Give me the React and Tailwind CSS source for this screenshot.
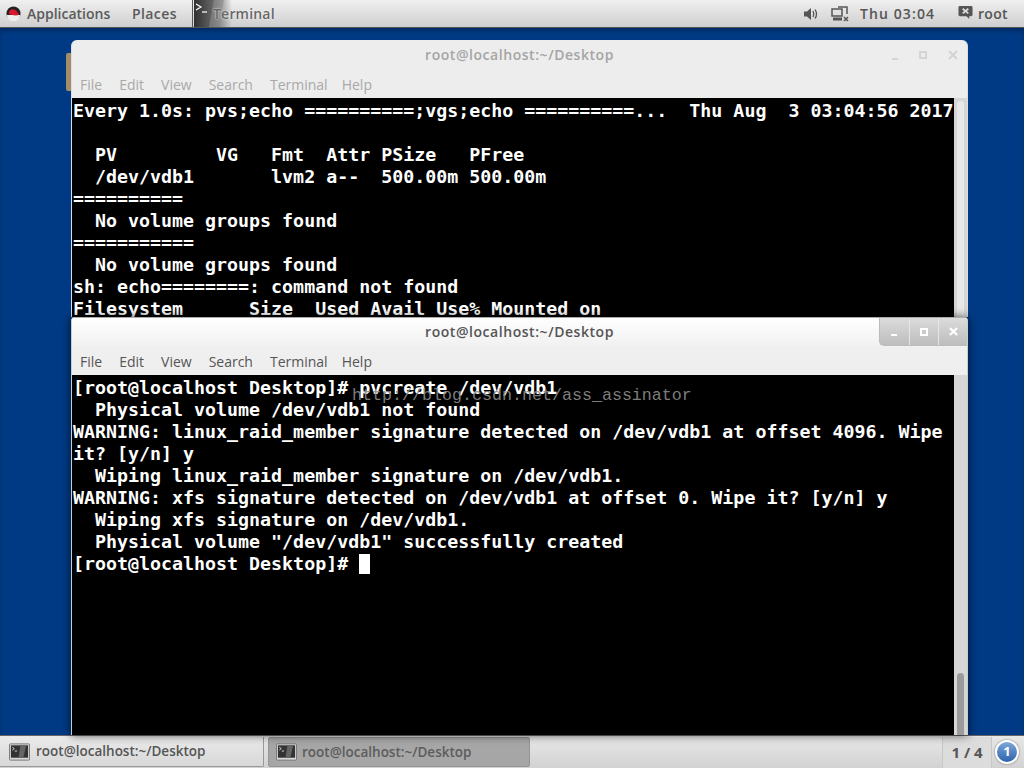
const mono = "font-['DejaVu_Sans_Mono',monospace] font-bold text-white text-[18.3px] leading-[22px] whitespace-pre";
const ui = "font-['Open_Sans',sans-serif]";

const backLines = [
  "Every 1.0s: pvs;echo ==========;vgs;echo ==========...  Thu Aug  3 03:04:56 2017",
  "",
  "  PV         VG   Fmt  Attr PSize   PFree",
  "  /dev/vdb1       lvm2 a--  500.00m 500.00m",
  "==========",
  "  No volume groups found",
  "===========",
  "  No volume groups found",
  "sh: echo========: command not found",
  "Filesystem      Size  Used Avail Use% Mounted on",
];
const frontLines = [
  "[root@localhost Desktop]# pvcreate /dev/vdb1",
  "  Physical volume /dev/vdb1 not found",
  "WARNING: linux_raid_member signature detected on /dev/vdb1 at offset 4096. Wipe",
  "it? [y/n] y",
  "  Wiping linux_raid_member signature on /dev/vdb1.",
  "WARNING: xfs signature detected on /dev/vdb1 at offset 0. Wipe it? [y/n] y",
  "  Wiping xfs signature on /dev/vdb1.",
  '  Physical volume "/dev/vdb1" successfully created',
];

function TermIcon({ className }) {
  return (
    <svg viewBox="0 0 22 18" className={className}>
      <rect x="0.5" y="0.5" width="21" height="17" rx="1" fill="#d8d8d8" stroke="#777" />
      <rect x="2" y="2" width="18" height="13" fill="#333" />
      <path d="M12 2h6l-3 13h-5z" fill="#666" />
      <path d="M3.5 4l2 1.5-2 1.5" stroke="#fff" strokeWidth="0.8" fill="none" />
      <path d="M6 8h2.5" stroke="#fff" strokeWidth="0.8" />
    </svg>
  );
}

function Menu({ dim }) {
  return (
    <div className={`h-[28px] flex items-center gap-[17px] pl-[8px] text-[14px] ${ui} ${dim ? "text-[#a9a9a9]" : "text-[#555]"}`}>
      <span>File</span><span>Edit</span><span>View</span><span>Search</span><span>Terminal</span><span className="-ml-[3px]">Help</span>
    </div>
  );
}

function Terminal({ lines, children, thumb, height }) {
  return (
    <div className={`flex ${height} bg-black`}>
      <div className={`flex-1 overflow-hidden relative pl-[1px] pt-[2px] ${mono}`}>
        {lines.map((l, i) => <div key={i} className="h-[22px]">{l || " "}</div>)}
        {children}
      </div>
      <div className="w-[13px] bg-[#d6d6d6] flex flex-col justify-end items-center shrink-0">{thumb}</div>
    </div>
  );
}

export default function App() {
  return (
    <div className="w-[1024px] h-[768px] overflow-hidden flex flex-col bg-[#003a85]">
      <header className={`h-[28px] shrink-0 flex items-center border-b border-[#555] bg-gradient-to-b from-[#f0f0f0] to-[#cfcfcf] text-[14px] text-[#555] ${ui}`}>
        <svg viewBox="0 0 16 16" className="w-[15px] h-[15px] ml-[6px] mr-[6px]">
          <circle cx="8" cy="8" r="7.5" fill="#222" />
          <path d="M1 9.5a7 7 0 0 0 14 0z" fill="#eee" />
          <path d="M2.5 8c1-1 1.5-4.500 4-4.500 1 0 1.500.5 2.500.5 1.500 0 3 2 3.500 3.500 1 .5 1.500 1 1 2-2 1-8 .5-11-1.500z" fill="#d9182b" />
        </svg>
        <span className="font-semibold text-[#5a5a5a] w-[105px]">Applications</span>
        <span className="font-semibold text-[#5a5a5a] w-[60px] tracking-[0.4px]">Places</span>
        <div className="h-full w-[1px] bg-[#555]" />
        <div className="relative h-full flex items-center ml-[1px]">
          <div className="w-[38px] h-full bg-gradient-to-r from-[#303030] via-[#666] to-transparent relative overflow-hidden">
            <svg viewBox="0 0 38 27" className="absolute inset-0 w-[38px] h-[27px]">
              <path d="M20 0h10l-6 27h-9z" fill="#8a8a8a" opacity="0.6" />
              <path d="M2 4l5 3-5 3" stroke="#fff" strokeWidth="1.200" fill="none" />
              <path d="M8 12h5" stroke="#fff" strokeWidth="1.200" />
            </svg>
          </div>
          <span className="absolute left-[19px] font-semibold text-[#666] tracking-[0.2px] [text-shadow:0_0_2px_#fff]">Terminal</span>
        </div>
        <div className="ml-auto flex items-center h-full">
          <svg viewBox="0 0 16 16" className="w-[16px] h-[16px] mr-[12px]" fill="#555">
            <path d="M1 5.500h3l4-3.500v12l-4-3.500H1z" />
            <path d="M10 5c1 1.800 1 4.200 0 6M12 3.500c1.800 2.700 1.800 6.300 0 9" stroke="#555" strokeWidth="1.300" fill="none" />
          </svg>
          <svg viewBox="0 0 18 16" className="w-[18px] h-[16px] mr-[11px]" fill="none" stroke="#555" strokeWidth="1.500">
            <rect x="1" y="3" width="10" height="7" />
            <path d="M2 13h9" strokeWidth="3" />
            <path d="M7 1h9v7" />
            <path d="M13 11l4 4M17 11l-4 4" />
          </svg>
          <span className="font-semibold text-[#555] tracking-[1.1px] w-[98px]">Thu 03:04</span>
          <svg viewBox="0 0 16 16" className="w-[15px] h-[15px] mr-[5px] -mt-[3px]">
            <path d="M2 1h12a1.500 1.500 0 0 1 1.500 1.500v8a1.500 1.500 0 0 1-1.500 1.500h-2v3l-3-3H2A1.500 1.500 0 0 1 .5 10.500v-8A1.500 1.500 0 0 1 2 1z" fill="#555" />
            <path d="M5 4l6 5M11 4l-6 5" stroke="#ddd" strokeWidth="1.800" />
          </svg>
          <span className="w-[46px] font-semibold text-[#555] tracking-[0.3px]">root</span>
        </div>
      </header>

      <main className="relative flex-1 shadow-[inset_0_3px_4px_rgba(0,0,0,0.25)]">
        <div className="absolute left-[66px] top-[25px] w-[6px] h-[38px] rounded-l-[2px] bg-[#a08c68]" />

        <section className="absolute left-[71px] top-[12px] w-[897px] rounded-t-[6px] bg-[#ededed] overflow-hidden border-x border-[#ddd]">
          <div className="h-[30px] relative flex items-center justify-center">
            <span className={`text-[14px] text-[#a5a5a5] font-semibold tracking-[0.55px] -mt-[2px] ${ui}`}>root@localhost:~/Desktop</span>
            <div className="absolute right-[9px] top-[10px] flex items-center gap-[21px] text-[#d4d4d4]">
              <div className="w-[6px] h-[2px] bg-[#d4d4d4] mt-[8px]" />
              <div className="w-[8px] h-[8px] border-2 border-[#d4d4d4]" />
              <svg viewBox="0 0 10 10" className="w-[10px] h-[10px]"><path d="M1 1l8 8M9 1l-8 8" stroke="#d4d4d4" strokeWidth="2.200" /></svg>
            </div>
          </div>
          <Menu dim />
          <Terminal
            lines={backLines}
            height="h-[219px]"
            thumb={<div className="w-[7px] h-[216px] rounded-t-[4px] bg-[#e8e8e8]" />}
          />
        </section>

        <section className="absolute left-[71px] top-[289px] w-[897px] bg-[#efefef] overflow-hidden border-x border-[#ccc] rounded-t-[4px] shadow-[0_0_10px_rgba(0,0,0,0.7)]">
          <div className="h-[30px] relative flex items-center justify-center bg-gradient-to-b from-white to-[#f0f0f0] border-t border-[#aaa]">
            <span className={`text-[14px] text-[#555] font-semibold tracking-[0.55px] -mt-[2px] ${ui}`}>root@localhost:~/Desktop</span>
            <div className="absolute right-0 top-0 h-[28px] w-[88px] flex rounded-bl-[5px] bg-gradient-to-b from-[#dcdcdc] to-[#bdbdbd] border-b border-l border-[#bbb]">
              <div className="w-[29px] flex items-center justify-center"><div className="w-[6px] h-[2px] bg-white mt-[6px]" /></div>
              <div className="w-[30px] flex items-center justify-center border-l border-[#e6e6e6]"><div className="w-[8px] h-[8px] border-2 border-white" /></div>
              <div className="w-[29px] flex items-center justify-center border-l border-[#e6e6e6]">
                <svg viewBox="0 0 10 10" className="w-[9px] h-[9px]"><path d="M1 1l8 8M9 1l-8 8" stroke="#fff" strokeWidth="2.400" /></svg>
              </div>
            </div>
          </div>
          <Menu />
          <Terminal
            lines={frontLines}
            height="h-[360px]"
            thumb={<div className="w-[7px] h-[62px] rounded-t-[4px] bg-[#9b9b9b]" />}
          >
            <div className="h-[22px] flex items-center">
              <span>[root@localhost Desktop]# </span>
              <span className="w-[11px] h-[20px] bg-white" />
            </div>
            <span className="absolute left-[280px] top-[10px] font-['Liberation_Mono',monospace] font-normal text-[16.67px] text-[#8a8a8a] opacity-90">http://blog.csdn.net/ass_assinator</span>
          </Terminal>
        </section>
      </main>

      <footer className={`h-[33px] shrink-0 flex items-center bg-gradient-to-b from-[#e8e8e8] to-[#d2d2d2] border-t border-[#666] text-[13.5px] font-semibold ${ui}`}>
        <div className="w-[264px] h-[30px] flex items-center bg-gradient-to-b from-[#eaeaea] to-[#d8d8d8] border-b border-r border-[#999] rounded-br-[2px]">
          <TermIcon className="w-[21px] h-[18px] ml-[9px]" />
          <span className="ml-[6px] text-[#555]">root@localhost:~/Desktop</span>
        </div>
        <div className="ml-[4px] w-[262px] h-[30px] flex items-center bg-[#a6a6a6] border border-[#959595] rounded-[2px]">
          <TermIcon className="w-[21px] h-[18px] ml-[7px]" />
          <span className="ml-[5px] text-[#5c5c5c]">root@localhost:~/Desktop</span>
        </div>
        <div className="ml-auto w-[50px] h-[31px] mr-[3px] flex items-center justify-center bg-[#dcdcdc] border-x border-[#c8c8c8] font-bold text-[#555] text-[15px]">1 / 4</div>
        <div className="w-[24px] h-[24px] mr-[5px] rounded-full border-2 border-white bg-gradient-to-b from-[#7fa7d8] to-[#2c62ad] shadow-[0_0_2px_rgba(0,0,0,0.6)] flex items-center justify-center text-white text-[13px] font-bold">1</div>
      </footer>
    </div>
  );
}
